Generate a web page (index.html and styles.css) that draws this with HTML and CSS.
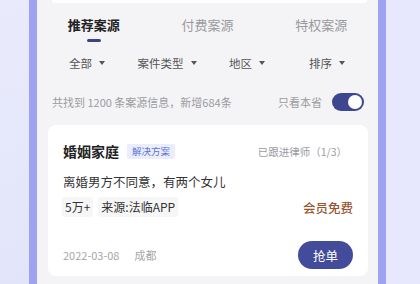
FILE: index.html
```html
<!DOCTYPE html>
<html lang="zh">
<head>
<meta charset="utf-8">
<link rel="stylesheet" href="styles.css">
</head>
<body>
<div class="screen">
  <div class="bg-left"></div>
  <div class="strip"></div>
  <div class="phone">
    <div class="top-card"></div>
    <div class="tabs">
      <div class="tab active">推荐案源<span class="indicator"></span></div>
      <div class="tab">付费案源</div>
      <div class="tab">特权案源</div>
    </div>
    <div class="filters">
      <div class="filter">全部<span class="caret"></span></div>
      <div class="filter">案件类型<span class="caret"></span></div>
      <div class="filter">地区<span class="caret"></span></div>
      <div class="filter">排序<span class="caret"></span></div>
    </div>
    <div class="info">
      <span class="count">共找到 1200 条案源信息，新增684条</span>
      <div class="province">
        <span>只看本省</span>
        <span class="toggle"><span class="knob"></span></span>
      </div>
    </div>
    <div class="card">
      <div class="card-head">
        <div class="title-wrap">
          <span class="title">婚姻家庭</span>
          <span class="tag">解决方案</span>
        </div>
        <span class="followed">已跟进律师（1/3）</span>
      </div>
      <div class="desc">离婚男方不同意，有两个女儿</div>
      <div class="meta">
        <div class="chips">
          <span class="chip">5万+</span>
          <span class="chip">来源:法临APP</span>
        </div>
        <span class="free">会员免费</span>
      </div>
      <div class="card-foot">
        <div class="when">
          <span>2022-03-08</span>
          <span>成都</span>
        </div>
        <button class="grab">抢单</button>
      </div>
    </div>
  </div>
  <div class="strip"></div>
  <div class="bg-right"></div>
</div>
</body>
</html>
```
FILE: styles.css
```css
* { box-sizing: border-box; }
html, body { margin: 0; padding: 0; }
body {
  width: 420px;
  height: 284px;
  overflow: hidden;
  font-family: "Noto Sans CJK SC", "Noto Sans", sans-serif;
  background: #e6e8fc;
}
.screen {
  display: flex;
  width: 420px;
  height: 284px;
}
.bg-left {
  width: 29px;
  background: linear-gradient(160deg, #e9ebfc 0%, #e2e4f9 100%);
}
.strip {
  width: 8px;
  background: #9da3f1;
}
.bg-right {
  flex: 1;
  background: #e7e8fd;
}
.phone {
  width: 341px;
  background: #f4f4f6;
  display: flex;
  flex-direction: column;
}
.top-card {
  height: 3px;
  margin: 0 11px 0 15px;
  background: #ffffff;
  border-radius: 0 0 6px 6px;
}
.tabs {
  display: grid;
  grid-template-columns: 1fr 1fr 1fr;
  margin-top: 13px;
}
.tab {
  position: relative;
  text-align: center;
  font-size: 13px;
  line-height: 18px;
  color: #9a9a9e;
  height: 26px;
}
.tab.active {
  color: #222;
  font-weight: 700;
}
.indicator {
  position: absolute;
  left: 50%;
  top: 23px;
  width: 14px;
  height: 3px;
  margin-left: -7px;
  border-radius: 2px;
  background: #3b4388;
}
.filters {
  display: grid;
  grid-template-columns: repeat(4, 1fr);
  padding: 0 11px 0 10px;
  margin-top: 13px;
}
.filter {
  display: flex;
  align-items: center;
  justify-content: center;
  font-size: 11.5px;
  line-height: 16px;
  color: #555;
}
.caret {
  width: 0;
  height: 0;
  margin-left: 7px;
  border-left: 3px solid transparent;
  border-right: 3px solid transparent;
  border-top: 4px solid #555;
}
.info {
  display: flex;
  align-items: center;
  justify-content: space-between;
  padding: 0 14px 0 15px;
  margin-top: 22px;
  height: 18px;
}
.count {
  font-size: 11px;
  color: #9b9b9f;
}
.province {
  display: flex;
  align-items: center;
  gap: 10px;
  font-size: 11px;
  color: #9b9b9f;
}
.toggle {
  position: relative;
  width: 32px;
  height: 18px;
  border-radius: 9px;
  background: #3e4690;
}
.knob {
  position: absolute;
  right: 2px;
  top: 2px;
  width: 14px;
  height: 14px;
  border-radius: 50%;
  background: #fff;
}
.card {
  margin: 14px 10px 0 11px;
  background: #fff;
  border-radius: 8px;
  padding: 16px 15px 7px 15px;
}
.card-head {
  display: flex;
  align-items: center;
  justify-content: space-between;
  height: 20px;
}
.title-wrap {
  display: flex;
  align-items: center;
  gap: 8px;
}
.title {
  font-size: 14px;
  font-weight: 700;
  color: #1f1f1f;
  line-height: 20px;
}
.tag {
  font-size: 9.5px;
  line-height: 15px;
  padding: 0 5px;
  color: #5b72d4;
  background: #e9edfc;
  border-radius: 2px;
}
.followed {
  font-size: 10.5px;
  color: #9b9b9f;
  margin-right: 6px;
}
.desc {
  margin-top: 12px;
  font-size: 12.5px;
  line-height: 18px;
  color: #333;
}
.meta {
  margin-top: 6px;
  display: flex;
  align-items: center;
  justify-content: space-between;
  height: 20px;
}
.chips {
  display: flex;
  gap: 5px;
  margin-left: -1px;
}
.chip {
  font-size: 12px;
  line-height: 20px;
  padding: 0 3px;
  color: #333;
  background: #f6f6f7;
  border-radius: 3px;
}
.free {
  font-size: 12.5px;
  font-weight: 500;
  color: #98552f;
}
.card-foot {
  margin-top: 24px;
  display: flex;
  align-items: center;
  justify-content: space-between;
}
.when {
  display: flex;
  gap: 15px;
  font-size: 11px;
  color: #a6a6aa;
}
.grab {
  width: 55px;
  height: 28px;
  border: none;
  border-radius: 14px;
  background: #434b9b;
  color: #fff;
  font-family: "Noto Sans CJK SC", sans-serif;
  font-size: 12.5px;
  padding: 0;
}
```
